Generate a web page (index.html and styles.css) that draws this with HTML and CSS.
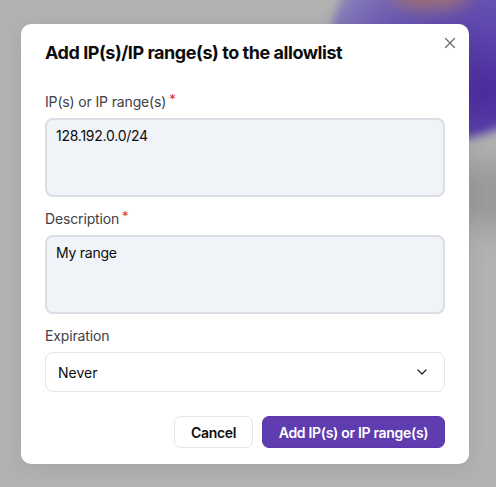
FILE: index.html
```html
<!DOCTYPE html>
<html>
<head>
<meta charset="utf-8">
<link rel="stylesheet" href="styles.css">
</head>
<body>
<div class="backdrop">
  <div class="blob"></div>
  <div class="blob-warm"></div>
  <div class="shade"></div>
  <div class="dialog">
    <button class="close" aria-label="Close">
      <svg width="12" height="12" viewBox="0 0 12 12"><path d="M1.5 1.5L10.5 10.5M10.5 1.5L1.5 10.5" stroke="#6b6b73" stroke-width="1.3" fill="none" stroke-linecap="round"/></svg>
    </button>
    <h1 class="title">Add IP(s)/IP range(s) to the allowlist</h1>
    <div class="field">
      <label class="label">IP(s) or IP range(s)<span class="req">*</span></label>
      <div class="textarea">128.192.0.0/24</div>
    </div>
    <div class="field">
      <label class="label">Description<span class="req">*</span></label>
      <div class="textarea">My range</div>
    </div>
    <div class="field">
      <label class="label">Expiration</label>
      <div class="select">
        <span>Never</span>
        <svg width="10" height="6" viewBox="0 0 10 6"><path d="M1 1L5 5L9 1" stroke="#222" stroke-width="1.2" fill="none" stroke-linecap="round" stroke-linejoin="round"/></svg>
      </div>
    </div>
    <div class="actions">
      <button class="btn btn-secondary">Cancel</button>
      <button class="btn btn-primary">Add IP(s) or IP range(s)</button>
    </div>
  </div>
</div>
</body>
</html>
```
FILE: styles.css
```css
* { box-sizing: border-box; }
html, body { margin: 0; padding: 0; }
body {
  width: 496px;
  height: 487px;
  overflow: hidden;
  font-family: Inter, "Noto Sans", sans-serif;
  color: #0d0d0d;
}
.backdrop {
  position: relative;
  width: 496px;
  height: 487px;
  background: #b2b2b2;
  padding: 24px 27px 0 21px;
  overflow: hidden;
}
.shade {
  position: absolute;
  left: 440px;
  top: 160px;
  width: 120px;
  height: 70px;
  border-radius: 50%;
  background: #9a9a9a;
  filter: blur(14px);
}
.blob {
  position: absolute;
  left: 330px;
  top: -55px;
  width: 230px;
  height: 195px;
  border-radius: 50%;
  background: radial-gradient(ellipse at 68% 75%, #4a2a9c 0%, #5e46ad 30%, #6c5ab3 55%, #8478b8 75%, rgba(178,178,178,0) 100%);
  filter: blur(5px);
}
.blob-warm {
  position: absolute;
  left: 390px;
  top: -22px;
  width: 80px;
  height: 32px;
  border-radius: 50%;
  background: #9a6f78;
  filter: blur(8px);
}
.dialog {
  position: relative;
  width: 448px;
  height: 440px;
  background: #fff;
  border-radius: 10px;
  padding: 16px 24px 16px 24px;
  box-shadow: 0 4px 20px rgba(0,0,0,0.08);
}
.close {
  position: absolute;
  top: 13px;
  right: 13px;
  width: 12px;
  height: 12px;
  padding: 0;
  border: 0;
  background: none;
  display: flex;
}
.title {
  margin: 0 0 26px 0;
  font-size: 18px;
  font-weight: 700;
  line-height: 26px;
  letter-spacing: -0.45px;
  color: #0d0d0d;
}
.field {
  display: flex;
  flex-direction: column;
  margin-bottom: 12px;
}
.label {
  font-size: 14px;
  line-height: 20px;
  color: #404048;
  margin-bottom: 6px;
  letter-spacing: -0.15px;
}
.req {
  color: #e02e2a;
  margin-left: 3px;
  font-size: 13px;
  position: relative;
  top: -3px;
}
.textarea {
  height: 79px;
  background: #f0f3f8;
  border: 2px solid #dadee4;
  border-radius: 8px;
  padding: 6px 9px;
  font-size: 14px;
  line-height: 20px;
  color: #0d0d0d;
  letter-spacing: -0.25px;
}
.select {
  height: 40px;
  border: 1px solid #e3e5ee;
  border-radius: 8px;
  display: flex;
  align-items: center;
  justify-content: space-between;
  padding: 0 17px 0 12px;
  font-size: 14px;
  color: #0d0d0d;
}
.actions {
  display: flex;
  justify-content: flex-end;
  gap: 9px;
  margin-top: 24px;
}
.btn {
  height: 32px;
  border-radius: 7px;
  font-family: Inter, "Noto Sans", sans-serif;
  font-size: 14px;
  font-weight: 600;
  letter-spacing: -0.3px;
  padding: 0 12px;
  cursor: pointer;
}
.btn-secondary {
  width: 79px;
  background: #fff;
  border: 1px solid #e3e5ee;
  color: #0d0d0d;
}
.btn-primary {
  width: 183px;
  background: #5f3db0;
  border: 1px solid #5a38ab;
  color: #fff;
}
```
